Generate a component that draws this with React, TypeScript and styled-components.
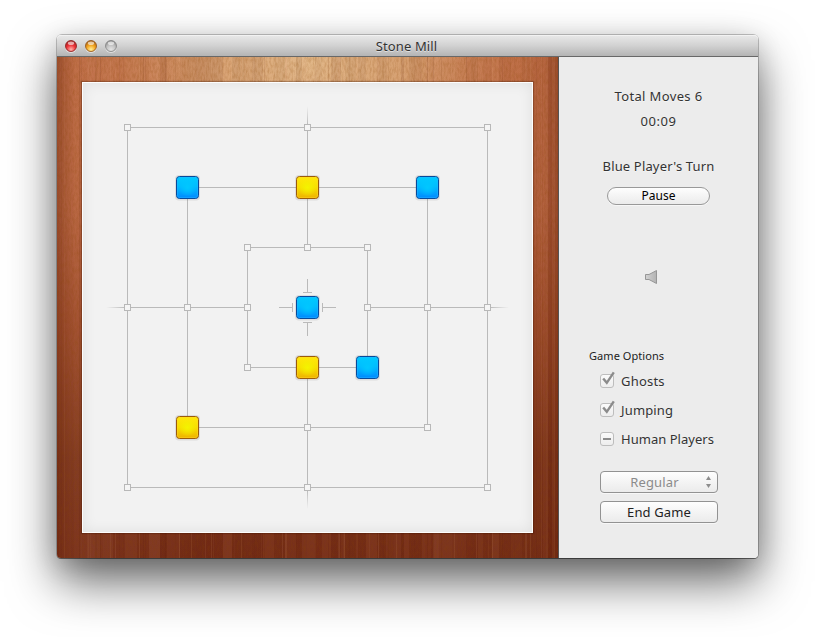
import React from "react";
import styled, { createGlobalStyle, css } from "styled-components";

const GlobalStyle = createGlobalStyle`
  html, body { margin: 0; background: #fff; overflow: hidden; }
  * { box-sizing: border-box; }
`;

const Desktop = styled.div`
  width: 815px;
  height: 637px;
  padding: 35px 57px;
  overflow: hidden;
  background: #fff;
  font-family: "Noto Sans", "Open Sans", sans-serif;
  font-size: 13px;
  color: #333;
`;

const Window = styled.main`
  width: 701px;
  height: 523px;
  display: flex;
  flex-direction: column;
  border-radius: 5px 5px 4px 4px;
  box-shadow: 0 0 0 1px rgba(0, 0, 0, 0.22), 0 1px 0 0 rgba(0, 0, 0, 0.35), 0 24px 48px rgba(0, 0, 0, 0.58),
    0 6px 26px rgba(0, 0, 0, 0.16);
`;

const TitleBar = styled.header`
  height: 22px;
  display: grid;
  grid-template-columns: 80px 1fr 80px;
  align-items: center;
  padding-left: 7px;
  padding-right: 7px;
  border-radius: 4px 4px 0 0;
  background: linear-gradient(#e9e9e9, #d2d2d2 50%, #b4b4b4);
  border-bottom: 1px solid #686868;
  box-shadow: inset 0 1px #f2f2f2;
`;

const Lights = styled.div`
  display: flex;
  gap: 6px;
`;

const Title = styled.h1`
  margin: 0 2px 0 0;
  text-align: center;
  font-size: 13px;
  font-weight: 400;
  line-height: 20px;
  letter-spacing: 0.1px;
  white-space: nowrap;
  text-shadow: 0 1px rgba(255, 255, 255, 0.5);
`;

const Content = styled.div`
  display: flex;
  height: 501px;
`;

const WoodFrame = styled.section`
  position: relative;
  width: 501px;
  height: 501px;
  padding: 25px;
  overflow: hidden;
  border-radius: 0 0 0 4px;
`;

const WoodGrain = styled.svg`
  position: absolute;
  inset: 0;
`;

const Board = styled.div`
  position: relative;
  width: 451px;
  height: 451px;
  border: 1px solid #fdfdfd;
  background: #f2f2f2;
  box-shadow: 0 0 1px 1px rgba(60, 15, 0, 0.3), inset 0 0 14px rgba(0, 0, 0, 0.08);
`;

const BoardDrawing = styled.svg`
  display: block;
  margin: -1px;
`;

const SidePanel = styled.aside`
  width: 200px;
  display: flex;
  flex-direction: column;
  align-items: center;
  padding-top: 27px;
  background: #ececec;
  border-left: 1px solid #555;
  border-radius: 0 0 4px 0;
`;

const Status = styled.p<{ $gap?: number; $spacing?: number }>`
  margin: ${(p) => p.$gap ?? 0}px 0 0;
  height: 25px;
  line-height: 24px;
  letter-spacing: ${(p) => p.$spacing ?? 0}px;
  white-space: nowrap;
  text-shadow: 0 1px rgba(255, 255, 255, 0.5);
`;

const buttonBase = css`
  padding: 0;
  font-family: inherit;
  background: linear-gradient(#fefefe, #f4f4f4 50%, #ebebeb);
  white-space: nowrap;
`;

const PauseButton = styled.button`
  ${buttonBase}
  width: 103px;
  height: 18px;
  margin-top: 8px;
  border: 1px solid #999;
  border-radius: 9px;
  font-size: 12px;
  line-height: 16px;
  color: #000;
  box-shadow: 0 1px rgba(255, 255, 255, 0.6);
`;

const SoundButton = styled.button`
  display: block;
  width: 16px;
  height: 18px;
  padding: 0;
  margin: 63px 15px 0 0;
  border: 0;
  background: none;
`;

const Options = styled.section`
  width: 199px;
  margin-top: 61px;
  padding-left: 30px;
`;

const OptionsHeading = styled.h2`
  margin: 0 0 1px;
  font-size: 11px;
  font-weight: 400;
  line-height: 18px;
  letter-spacing: 0.06px;
  color: #222;
`;

const Option = styled.div`
  display: flex;
  align-items: center;
  height: 29px;
  padding-left: 9px;
  gap: 5px;
  text-shadow: 0 1px rgba(255, 255, 255, 0.5);
`;

const OptionText = styled.span<{ $spacing: number }>`
  line-height: 20px;
  letter-spacing: ${(p) => p.$spacing}px;
  white-space: nowrap;
`;

const Actions = styled.div`
  display: grid;
  gap: 8px;
  margin: 18px 0 0 1px;
`;

const ActionButton = styled.button<{ $muted?: boolean }>`
  ${buttonBase}
  display: grid;
  grid-template-columns: ${(p) => (p.$muted ? "101px 8px" : "1fr")};
  align-items: center;
  width: 118px;
  height: 22px;
  padding-left: ${(p) => (p.$muted ? 3 : 0)}px;
  border: 1px solid #929292;
  border-radius: 4px;
  font-size: 13px;
  line-height: 18px;
  letter-spacing: 0.12px;
  color: ${(p) => (p.$muted ? "#8b8b8b" : "#222")};
  box-shadow: 0 1px rgba(255, 255, 255, 0.6);
`;

type LightColors = { id: string; rim: string; mid: string; low: string };

const LIGHTS: LightColors[] = [
  { id: "close", rim: "#8d1f1d", mid: "#ed3036", low: "#ffb4ac" },
  { id: "minimize", rim: "#935319", mid: "#f2a21c", low: "#fff09a" },
  { id: "zoom", rim: "#828282", mid: "#c2c2c2", low: "#e4e4e4" },
];

function TrafficLight({ id, rim, mid, low }: LightColors) {
  return (
    <svg width="14" height="15" viewBox="0 0 14 15">
      <defs>
        <radialGradient id={id} cx="50%" cy="82%" r="85%">
          <stop offset="0" stopColor={low} />
          <stop offset="0.5" stopColor={mid} />
          <stop offset="1" stopColor={rim} />
        </radialGradient>
      </defs>
      <circle cx="7" cy="9" r="6" fill="#fff" opacity="0.5" />
      <circle cx="7" cy="8" r="5.5" fill={`url(#${id})`} stroke={rim} strokeOpacity="0.85" />
      <ellipse cx="7" cy="5.3" rx="3.2" ry="1.8" fill="#fff" opacity="0.6" />
    </svg>
  );
}

function seeded(seed: number) {
  let s = seed;
  return () => {
    s = (s * 16807) % 2147483647;
    return s / 2147483647;
  };
}

function makeGrain() {
  const rand = seeded(4127);
  const strips: { x: number; w: number; light: boolean; o: number }[] = [];
  let x = 0;
  while (x < 501) {
    const w = 2 + Math.floor(rand() * 12);
    strips.push({ x, w, light: rand() > 0.5, o: 0.015 + rand() * 0.08 });
    x += w;
  }
  for (let i = 0; i < 70; i++) {
    strips.push({ x: Math.floor(rand() * 501), w: 1, light: rand() > 0.45, o: 0.03 + rand() * 0.09 });
  }
  return strips;
}

const GRAIN = makeGrain();

function Wood() {
  return (
    <WoodGrain width="501" height="501" viewBox="0 0 501 501" aria-hidden="true">
      <defs>
        <linearGradient id="wood-base" x1="0" y1="0" x2="0" y2="1">
          <stop offset="0" stopColor="#be6c45" />
          <stop offset="0.3" stopColor="#b96541" />
          <stop offset="0.55" stopColor="#9e4c2d" />
          <stop offset="0.8" stopColor="#7d351d" />
          <stop offset="1" stopColor="#752d18" />
        </linearGradient>
        <radialGradient id="wood-glow" gradientUnits="userSpaceOnUse" cx="250" cy="0" r="240">
          <stop offset="0" stopColor="#e6bf8f" />
          <stop offset="0.4" stopColor="#dfaf7e" stopOpacity="0.85" />
          <stop offset="1" stopColor="#cd8556" stopOpacity="0" />
        </radialGradient>
        <linearGradient id="wood-sides">
          <stop offset="0" stopColor="#601b05" stopOpacity="0.38" />
          <stop offset="0.035" stopColor="#601b05" stopOpacity="0.04" />
          <stop offset="0.965" stopColor="#601b05" stopOpacity="0.04" />
          <stop offset="1" stopColor="#601b05" stopOpacity="0.38" />
        </linearGradient>
        <filter id="wood-noise" x="0" y="0" width="100%" height="100%">
          <feTurbulence type="fractalNoise" baseFrequency="0.55 0.18" numOctaves="3" seed="8" />
          <feColorMatrix values="0 0 0 0 0.25  0 0 0 0 0.06  0 0 0 0 0  1.1 0 0 0 -0.4" />
        </filter>
      </defs>
      <rect width="501" height="501" fill="url(#wood-base)" />
      <rect width="501" height="260" fill="url(#wood-glow)" />
      {GRAIN.map((g, i) => (
        <rect key={i} x={g.x} width={g.w} height="501" fill={g.light ? "#ffc39c" : "#4a1000"} opacity={g.o} />
      ))}
      <rect width="501" height="501" fill="url(#wood-sides)" />
      <rect width="501" height="501" filter="url(#wood-noise)" opacity="0.4" />
    </WoodGrain>
  );
}

const NODES: [number, number][] = [
  [45, 45], [225, 45], [405, 45],
  [165, 165], [225, 165], [285, 165],
  [45, 225], [105, 225], [165, 225], [285, 225], [345, 225], [405, 225],
  [165, 285],
  [225, 345], [345, 345],
  [45, 405], [225, 405], [405, 405],
];

const STONES: { x: number; y: number; color: "blue" | "yellow" }[] = [
  { x: 105, y: 105, color: "blue" },
  { x: 225, y: 105, color: "yellow" },
  { x: 345, y: 105, color: "blue" },
  { x: 225, y: 225, color: "blue" },
  { x: 225, y: 285, color: "yellow" },
  { x: 285, y: 285, color: "blue" },
  { x: 105, y: 345, color: "yellow" },
];

const RIM = { blue: "#074a9b", yellow: "#9c5c0a" };
const EDGE = { blue: "#25b4ff", yellow: "#ffd52b" };

function MillBoard() {
  return (
    <BoardDrawing width="451" height="451" viewBox="0 0 451 451">
      <defs>
        <linearGradient id="blue-body" x1="0" y1="0" x2="0" y2="1">
          <stop offset="0" stopColor="#00ccff" />
          <stop offset="0.45" stopColor="#00bcff" />
          <stop offset="1" stopColor="#0088ff" />
        </linearGradient>
        <linearGradient id="yellow-body" x1="0" y1="0" x2="0" y2="1">
          <stop offset="0" stopColor="#ffe90a" />
          <stop offset="0.5" stopColor="#f8de00" />
          <stop offset="1" stopColor="#eeb000" />
        </linearGradient>
        <radialGradient id="blue-glow">
          <stop offset="0" stopColor="#00c8ff" />
          <stop offset="1" stopColor="#00c8ff" stopOpacity="0" />
        </radialGradient>
        <radialGradient id="yellow-glow">
          <stop offset="0" stopColor="#f4f400" />
          <stop offset="1" stopColor="#f4f400" stopOpacity="0" />
        </radialGradient>
        <linearGradient id="tail">
          <stop offset="0" stopColor="#b4b4b4" stopOpacity="0" />
          <stop offset="1" stopColor="#b4b4b4" />
        </linearGradient>
      </defs>
      <g fill="none" stroke="#bababa" shapeRendering="crispEdges">
        <rect x="45.5" y="45.5" width="360" height="360" />
        <rect x="105.5" y="105.5" width="240" height="240" />
        <rect x="165.5" y="165.5" width="120" height="120" />
        <path d="M225.5 45V165M225.5 285V405M45 225.5H165M285 225.5H405" />
        <path d="M225.5 197V210M221 210.5H230M225.5 241V254M221 240.5H230" />
        <path d="M197 225.5H210M210.5 221V230M241 225.5H254M240.5 221V230" />
      </g>
      {[0, 90, 180, 270].map((angle) => (
        <rect key={angle} x="24" y="225" width="21" height="1" fill="url(#tail)" transform={`rotate(${angle} 225.5 225.5)`} />
      ))}
      {NODES.map(([x, y]) => (
        <rect key={`${x}-${y}`} x={x - 2.5} y={y - 2.5} width="6" height="6" fill="#f5f5f5" stroke="#b8b8b8" />
      ))}
      {STONES.map(({ x, y, color }) => (
        <g key={`${x}-${y}`} transform={`translate(${x - 11} ${y - 11})`}>
          <rect x="-1" y="-1" width="25" height="25.5" rx="4" fill="#555" opacity="0.13" />
          <rect x="0.5" y="0.5" width="22" height="22" rx="3" fill={`url(#${color}-body)`} stroke={RIM[color]} />
          <rect x="1.5" y="1.5" width="20" height="20" rx="2" fill="none" stroke={EDGE[color]} opacity="0.45" />
          <circle cx="11.5" cy="11.5" r="9" fill={`url(#${color}-glow)`} />
        </g>
      ))}
    </BoardDrawing>
  );
}

function CheckIcon({ mixed }: { mixed?: boolean }) {
  return (
    <svg width="18" height="20" viewBox="0 1 18 20">
      <defs>
        <linearGradient id="checkbox-face" x1="0" y1="0" x2="0" y2="1">
          <stop offset="0" stopColor="#fbfbfb" />
          <stop offset="1" stopColor="#ededed" />
        </linearGradient>
      </defs>
      <rect x="2.5" y="4.5" width="13" height="13" rx="2.5" fill="url(#checkbox-face)" stroke="#bdbdbd" />
      {mixed ? (
        <rect x="5" y="10" width="8" height="2" fill="#8c8c8c" />
      ) : (
        <path d="M5.2 8.4L8.8 12.8L15.8 2.4" fill="none" stroke="#8b8b8b" strokeWidth="2.4" />
      )}
    </svg>
  );
}

const OPTIONS = [
  { label: "Ghosts", spacing: 0.2, mixed: false },
  { label: "Jumping", spacing: 0.15, mixed: false },
  { label: "Human Players", spacing: 0.03, mixed: true },
];

export default function App() {
  return (
    <>
      <GlobalStyle />
      <Desktop>
        <Window>
          <TitleBar>
            <Lights>
              {LIGHTS.map((light) => (
                <TrafficLight key={light.id} {...light} />
              ))}
            </Lights>
            <Title>Stone Mill</Title>
          </TitleBar>
          <Content>
            <WoodFrame>
              <Wood />
              <Board>
                <MillBoard />
              </Board>
            </WoodFrame>
            <SidePanel>
              <Status $spacing={0.36}>Total Moves 6</Status>
              <Status $spacing={0.6}>00:09</Status>
              <Status $gap={20} $spacing={0.16}>Blue Player's Turn</Status>
              <PauseButton>Pause</PauseButton>
              <SoundButton aria-label="Sound">
                <svg width="16" height="18" viewBox="0 0 16 18">
                  <defs>
                    <linearGradient id="speaker">
                      <stop offset="0" stopColor="#d2d2d2" />
                      <stop offset="1" stopColor="#b2b2b2" />
                    </linearGradient>
                  </defs>
                  <path d="M2.5 6.5H6L13.5 2.5V15.5L6 11.5H2.5Z" fill="url(#speaker)" stroke="#969696" strokeLinejoin="round" />
                </svg>
              </SoundButton>
              <Options>
                <OptionsHeading>Game Options</OptionsHeading>
                {OPTIONS.map((option) => (
                  <Option key={option.label}>
                    <CheckIcon mixed={option.mixed} />
                    <OptionText $spacing={option.spacing}>{option.label}</OptionText>
                  </Option>
                ))}
              </Options>
              <Actions>
                <ActionButton $muted>
                  <span>Regular</span>
                  <svg width="8" height="14" viewBox="0 0 8 14">
                    <path d="M1 5L3.5 1L6 5ZM1 9H6L3.5 13Z" fill="#8d8d8d" />
                  </svg>
                </ActionButton>
                <ActionButton>End Game</ActionButton>
              </Actions>
            </SidePanel>
          </Content>
        </Window>
      </Desktop>
    </>
  );
}
